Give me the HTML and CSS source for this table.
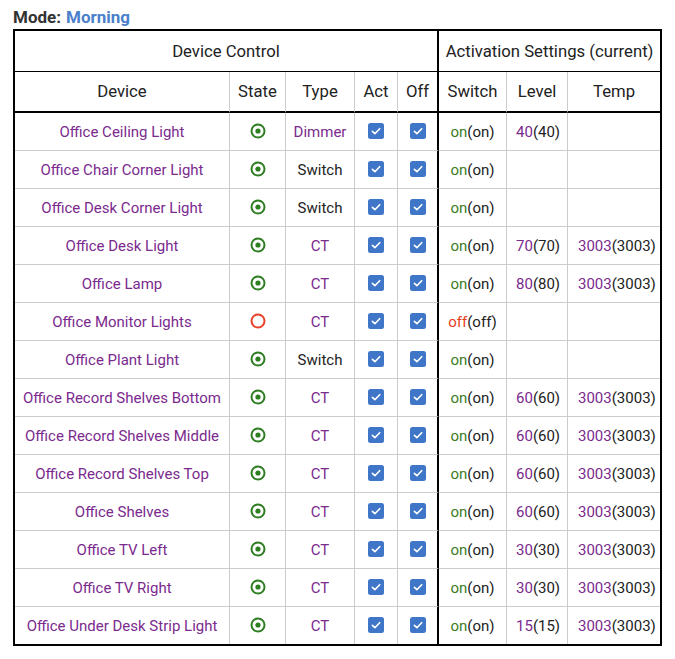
FILE: index.html
```html
<!DOCTYPE html>
<html>
<head>
<meta charset="utf-8">
<link rel="stylesheet" href="styles.css">
</head>
<body>
<div class="page">
  <div class="mode"><span class="mode-label">Mode:</span><span class="mode-value">Morning</span></div>
  <table class="grid">
    <colgroup>
      <col class="c-device"><col class="c-state"><col class="c-type"><col class="c-act"><col class="c-off"><col class="c-switch"><col class="c-level"><col class="c-temp">
    </colgroup>
    <thead>
      <tr class="h1">
        <th colspan="5" class="sep">Device Control</th>
        <th colspan="3" class="last">Activation Settings (current)</th>
      </tr>
      <tr class="h2">
        <th>Device</th><th>State</th><th>Type</th><th>Act</th><th class="sep">Off</th><th>Switch</th><th>Level</th><th class="last">Temp</th>
      </tr>
    </thead>
    <tbody id="rows"></tbody>
  </table>
</div>
<script src="app.js"></script>
</body>
</html>
```
FILE: app.js
```js
const rows = [
  ["Office Ceiling Light", true, "Dimmer", "on", "40", ""],
  ["Office Chair Corner Light", true, "Switch", "on", "", ""],
  ["Office Desk Corner Light", true, "Switch", "on", "", ""],
  ["Office Desk Light", true, "CT", "on", "70", "3003"],
  ["Office Lamp", true, "CT", "on", "80", "3003"],
  ["Office Monitor Lights", false, "CT", "off", "", ""],
  ["Office Plant Light", true, "Switch", "on", "", ""],
  ["Office Record Shelves Bottom", true, "CT", "on", "60", "3003"],
  ["Office Record Shelves Middle", true, "CT", "on", "60", "3003"],
  ["Office Record Shelves Top", true, "CT", "on", "60", "3003"],
  ["Office Shelves", true, "CT", "on", "60", "3003"],
  ["Office TV Left", true, "CT", "on", "30", "3003"],
  ["Office TV Right", true, "CT", "on", "30", "3003"],
  ["Office Under Desk Strip Light", true, "CT", "on", "15", "3003"]
];
const radioOn = '<svg class="ic" width="18" height="18" viewBox="0 0 18 18"><circle cx="9" cy="9" r="6.5" fill="none" stroke="#2e7d22" stroke-width="2"/><circle cx="9" cy="9" r="2.6" fill="#2e7d22"/></svg>';
const radioOff = '<svg class="ic" width="18" height="18" viewBox="0 0 18 18"><circle cx="9" cy="9" r="6.5" fill="none" stroke="#e8412a" stroke-width="2"/></svg>';
const check = '<svg class="cb" width="16" height="16" viewBox="0 0 16 16"><rect x="0" y="0" width="16" height="16" rx="2.5" fill="#3f76c8"/><path d="M4.4 8.3l2.5 2.4 4.8-5" fill="none" stroke="#fff" stroke-width="1.6" stroke-linecap="round" stroke-linejoin="round"/></svg>';
const tb = document.getElementById("rows");
tb.innerHTML = rows.map(r => {
  const [name, st, type, sw, lvl, tmp] = r;
  const typeCls = type === "Switch" ? "plain" : "val";
  const swCls = sw === "on" ? "on" : "off";
  return `<tr>
    <td class="name">${name}</td>
    <td>${st ? radioOn : radioOff}</td>
    <td class="${typeCls}">${type}</td>
    <td>${check}</td>
    <td class="sep">${check}</td>
    <td><span class="${swCls}">${sw}</span>(${sw})</td>
    <td class="left">${lvl ? `<span class="val">${lvl}</span>(${lvl})` : ""}</td>
    <td class="left tmp last">${tmp ? `<span class="val">${tmp}</span>(${tmp})` : ""}</td>
  </tr>`;
}).join("");
```
FILE: styles.css
```css
html, body {
  margin: 0;
  padding: 0;
  background: #fff;
}
body {
  font-family: Roboto, "Liberation Sans", sans-serif;
  color: #222;
}
.page {
  padding: 8px 0 0 13px;
}
.mode {
  font-size: 17px;
  font-weight: bold;
  line-height: 19px;
  height: 19px;
  margin: 0 0 2px 0;
}
.mode-label {
  color: #333;
  margin-right: 5px;
}
.mode-value {
  color: #4a7fcb;
}
.grid {
  border-collapse: separate;
  border-spacing: 0;
  table-layout: fixed;
  width: 649px;
  border: 2px solid #000;
}
.c-device { width: 215px; }
.c-state { width: 56px; }
.c-type { width: 69px; }
.c-act { width: 43px; }
.c-off { width: 41px; }
.c-switch { width: 68px; }
.c-level { width: 61px; }
.c-temp { width: 92px; }
th, td {
  box-sizing: border-box;
  padding: 0;
  text-align: center;
  vertical-align: middle;
  border-right: 1px solid #ccc;
  border-bottom: 1px solid #ccc;
  white-space: nowrap;
}
th {
  font-weight: normal;
  font-size: 16.7px;
  color: #222;
}
.h1 th {
  height: 41px;
  border-bottom: 1px solid #000;
}
.h2 th {
  height: 41px;
  border-bottom: 2px solid #000;
}
th.sep, td.sep {
  border-right: 2px solid #000;
}
th.last, td.last {
  border-right: none;
}
td {
  height: 38px;
  font-size: 15px;
  color: #222;
}
tbody tr:last-child td {
  border-bottom: none;
  height: 37px;
}
td.name {
  color: #7b2a8e;
}
td.left {
  text-align: left;
  padding-left: 9px;
}
td.tmp {
  padding-left: 10px;
}
.val {
  color: #7b2a8e;
}
.plain {
  color: #222;
}
.on {
  color: #3b7d1f;
}
.off {
  color: #e8401c;
}
.ic {
  display: block;
  margin: 0 auto;
  position: relative;
  top: -1px;
}
.cb {
  display: block;
  margin: 0 auto;
  position: relative;
  top: -1px;
}
```
